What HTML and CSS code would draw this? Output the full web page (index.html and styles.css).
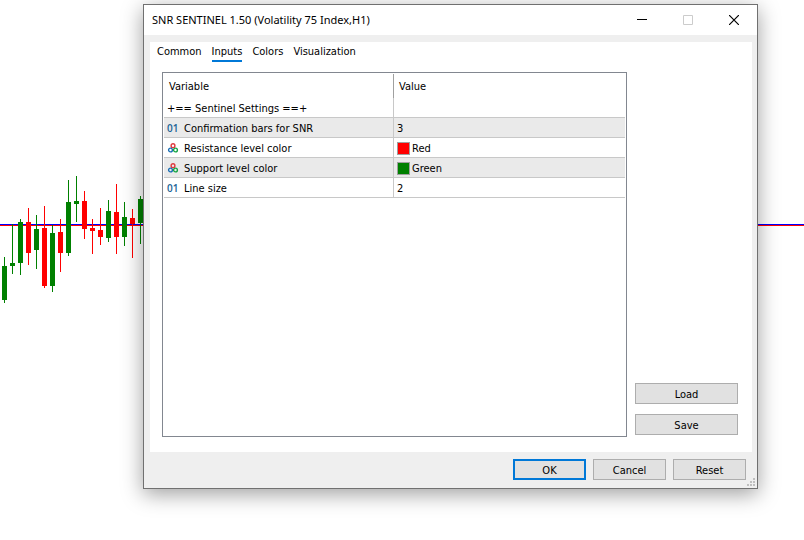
FILE: index.html
```html
<!DOCTYPE html>
<html lang="en">
<head>
    <meta charset="UTF-8">
    <meta name="viewport" content="width=device-width, initial-scale=1.0">
    <title>SNR SENTINEL 1.50</title>
    <link rel="stylesheet" href="styles.css">
</head>
<body>
    <!-- price chart behind the dialog -->
    <svg class="chart" aria-hidden="true" shape-rendering="crispEdges">
        <rect class="level-price" x="0" y="224" width="100%" height="1"/>
        <rect class="level-resistance" x="0" y="225" width="100%" height="1"/>
        <g class="bull">
            <path d="M4 257h1v46h-1z M2 266h5v34h-5z"/>
            <path d="M12 224h1v50h-1z M10 263h5v3h-5z"/>
            <path d="M20 219h1v56h-1z M18 222h5v41h-5z"/>
            <path d="M36 215h1v54h-1z M34 229h5v21h-5z"/>
            <path d="M52 225h1v67h-1z M50 233h5v53h-5z"/>
            <path d="M68 180h1v76h-1z M66 202h5v51h-5z"/>
            <path d="M76 176h1v46h-1z M74 201h5v3h-5z"/>
            <path d="M108 200h1v42h-1z M106 211h5v27h-5z"/>
            <path d="M124 202h1v44h-1z M122 217h5v20h-5z"/>
            <path d="M140 196h1v48h-1z M138 199h5v24h-5z"/>
        </g>
        <g class="bear">
            <path d="M28 208h1v57h-1z M26 222h5v31h-5z"/>
            <path d="M44 206h1v82h-1z M42 228h5v58h-5z"/>
            <path d="M60 219h1v53h-1z M58 232h5v21h-5z"/>
            <path d="M84 191h1v48h-1z M82 201h5v28h-5z"/>
            <path d="M92 219h1v35h-1z M90 228h5v3h-5z"/>
            <path d="M100 208h1v37h-1z M98 230h5v7h-5z"/>
            <path d="M116 184h1v70h-1z M114 212h5v25h-5z"/>
            <path d="M132 209h1v49h-1z M130 218h5v6h-5z"/>
        </g>
    </svg>

    <div class="dialog" role="dialog" aria-labelledby="dialogTitle">
        <div class="title-bar">
            <h1 id="dialogTitle">SNR SENTINEL 1.50 (Volatility 75 Index,H1)</h1>
            <button type="button" class="window-button" aria-label="Minimize">
                <svg width="10" height="10" shape-rendering="crispEdges"><path d="M0 4h10v1H0z"/></svg>
            </button>
            <button type="button" class="window-button" aria-label="Maximize" disabled>
                <svg width="10" height="10"><path d="M.5 .5h9v9h-9z" fill="none" stroke="#ccc"/></svg>
            </button>
            <button type="button" class="window-button" aria-label="Close">
                <svg width="10" height="10"><path d="M0 0l10 10M10 0L0 10" fill="none" stroke="#000" stroke-width="1.2"/></svg>
            </button>
        </div>

        <div class="panel">
            <nav class="tabs">
                <a href="#common">Common</a>
                <a href="#inputs" class="active">Inputs</a>
                <a href="#colors">Colors</a>
                <a href="#visualization">Visualization</a>
            </nav>

            <div class="panel-content">
                <div class="table-frame">
                    <table>
                        <thead>
                            <tr><th>Variable</th><th>Value</th></tr>
                        </thead>
                        <tbody>
                            <tr>
                                <td>+== Sentinel Settings ==+</td>
                                <td></td>
                            </tr>
                            <tr>
                                <td><span class="cell"><span class="number-icon">01</span>Confirmation bars for SNR</span></td>
                                <td>3</td>
                            </tr>
                            <tr>
                                <td><span class="cell"><svg class="color-icon" viewBox="0 0 12 10"><circle cx="6" cy="2.7" r="1.9" stroke="#e0393e"/><circle cx="3.5" cy="7" r="1.9" stroke="#1a6fb5"/><circle cx="8.5" cy="7" r="1.9" stroke="#17a545"/></svg>Resistance level color</span></td>
                                <td><span class="cell"><span class="swatch red"></span>Red</span></td>
                            </tr>
                            <tr>
                                <td><span class="cell"><svg class="color-icon" viewBox="0 0 12 10"><circle cx="6" cy="2.7" r="1.9" stroke="#e0393e"/><circle cx="3.5" cy="7" r="1.9" stroke="#1a6fb5"/><circle cx="8.5" cy="7" r="1.9" stroke="#17a545"/></svg>Support level color</span></td>
                                <td><span class="cell"><span class="swatch green"></span>Green</span></td>
                            </tr>
                            <tr>
                                <td><span class="cell"><span class="number-icon">01</span>Line size</span></td>
                                <td>2</td>
                            </tr>
                        </tbody>
                    </table>
                </div>

                <div class="side-buttons">
                    <button type="button" class="button">Load</button>
                    <button type="button" class="button">Save</button>
                </div>
            </div>
        </div>

        <div class="footer">
            <button type="button" class="button default">OK</button>
            <button type="button" class="button">Cancel</button>
            <button type="button" class="button">Reset</button>
        </div>

        <svg class="resize-grip" width="8" height="8" shape-rendering="crispEdges" aria-hidden="true">
            <path d="M6 0h2v2H6z M3 3h2v2H3z M6 3h2v2H6z M0 6h2v2H0z M3 6h2v2H3z M6 6h2v2H6z"/>
        </svg>
    </div>
</body>
</html>
```

FILE: styles.css
```css
* {
    margin: 0;
    padding: 0;
    box-sizing: border-box;
}

body {
    min-height: 100vh;
    background: #fff;
    color: #000;
    font-family: Tahoma, 'DejaVu Sans Condensed', 'DejaVu Sans', sans-serif;
    font-size: 11px;
    line-height: 14px;
    position: relative;
    overflow: hidden;
}

/* chart */
.chart {
    position: absolute;
    top: 0;
    left: 0;
    width: 100%;
    height: 100%;
}

.bull {
    fill: #008000;
}

.bear,
.level-resistance {
    fill: #f00;
}

.level-price {
    fill: #00f;
}

/* dialog window, floats over the chart */
.dialog {
    position: absolute;
    top: 4px;
    left: 143px;
    right: 46px;
    background: #efefef;
    border: 1px solid #707070;
    box-shadow: 0 5px 20px rgba(0, 0, 0, 0.38);
}

.title-bar {
    display: flex;
    height: 30px;
    padding-left: 8px;
    background: #fff;
}

h1 {
    flex: 1;
    font-family: 'Segoe UI', 'Noto Sans', sans-serif;
    font-size: 11px;
    font-weight: normal;
    line-height: 30px;
}

.window-button {
    display: flex;
    align-items: center;
    justify-content: center;
    width: 46px;
    background: none;
    border: none;
}

.panel {
    margin: 7px 5px 0 6px;
    background: #fff;
}

.tabs {
    display: flex;
    gap: 10px;
    padding: 3px 7px 0;
}

.tabs a {
    padding-bottom: 1px;
    border-bottom: 2px solid transparent;
    color: #000;
    text-decoration: none;
}

.tabs a.active {
    border-color: #0078d7;
}

.panel-content {
    display: flex;
    gap: 8px;
    padding: 10px 14px 15px 12px;
}

.table-frame {
    flex: 1;
    height: 365px;
    padding: 1px;
    border: 1px solid #828790;
}

table {
    width: 100%;
    border-collapse: separate;
    border-spacing: 0;
    table-layout: fixed;
}

th,
td {
    height: 20px;
    padding: 2px 3px 0;
    border-bottom: 1px solid #c8c8c8;
    font-weight: normal;
    text-align: left;
    white-space: nowrap;
}

th:first-child,
td:first-child {
    width: 230px;
    border-right: 1px solid #c8c8c8;
}

th {
    height: 24px;
    padding: 1px 5px 0;
    border-bottom: none;
}

th:first-child {
    border-right-color: #a0a0a0;
}

tbody tr:nth-child(even) {
    background: #eaeaea;
}

.cell {
    display: flex;
    align-items: flex-start;
}

.number-icon {
    width: 17px;
    color: #1a6396;
    font-family: 'Open Sans', sans-serif;
    font-size: 10px;
    font-weight: 600;
    line-height: 12px;
}

.color-icon {
    width: 12px;
    height: 10px;
    margin: 1px 5px 0 0;
    fill: none;
    stroke-width: 1.4;
}

.swatch {
    width: 13px;
    height: 13px;
    margin-right: 2px;
    border: 1px solid #a0a0a0;
}

.swatch.red {
    background: #f00;
}

.swatch.green {
    background: #008000;
}

.side-buttons {
    display: flex;
    flex-direction: column;
    justify-content: flex-end;
    gap: 10px;
    width: 103px;
    padding-bottom: 2px;
}

.button {
    height: 21px;
    padding-top: 2px;
    background: #e1e1e1;
    border: 1px solid #adadad;
    color: #000;
    font: inherit;
}

.button.default {
    border: 2px solid #0078d7;
}

.footer {
    display: flex;
    justify-content: flex-end;
    gap: 7px;
    padding: 7px 11px 8px;
}

.footer .button {
    width: 73px;
}

.resize-grip {
    position: absolute;
    right: 2px;
    bottom: 2px;
    fill: #bfbfbf;
}
```
